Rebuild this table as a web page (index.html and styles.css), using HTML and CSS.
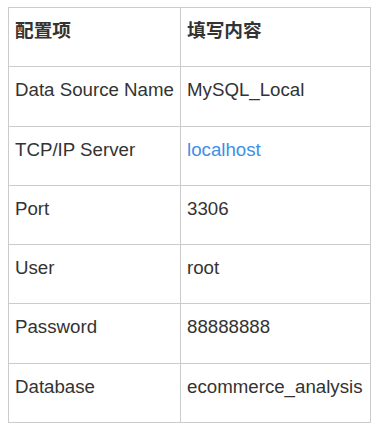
FILE: index.html
```html
<!DOCTYPE html>
<html lang="zh">
<head>
<meta charset="utf-8">
<link rel="stylesheet" href="styles.css">
</head>
<body>
<table class="cfg">
  <colgroup><col class="c1"><col class="c2"></colgroup>
  <thead>
    <tr><th>配置项</th><th>填写内容</th></tr>
  </thead>
  <tbody>
    <tr><td>Data Source Name</td><td>MySQL_Local</td></tr>
    <tr><td>TCP/IP Server</td><td><a class="link" href="#">localhost</a></td></tr>
    <tr><td>Port</td><td>3306</td></tr>
    <tr><td>User</td><td>root</td></tr>
    <tr><td>Password</td><td>88888888</td></tr>
    <tr><td>Database</td><td>ecommerce_analysis</td></tr>
  </tbody>
</table>
</body>
</html>
```
FILE: styles.css
```css
html, body { background: #fff; }
body {
  margin: 7px 8px;
  font-family: "Liberation Sans", Arial, "Noto Sans CJK SC", sans-serif;
  font-size: 18.7px;
  color: #333;
}
.cfg {
  border-collapse: collapse;
  table-layout: fixed;
  width: 362px;
}
.c1 { width: 172px; }
.c2 { width: 190px; }
.cfg th, .cfg td {
  border: 1px solid #cccccc;
  padding: 9px 6px 22.3px;
  line-height: 27px;
  text-align: left;
  vertical-align: top;
  white-space: nowrap;
}
.cfg th { font-weight: bold; }
.link { color: #3d8fe6; text-decoration: none; }
```
